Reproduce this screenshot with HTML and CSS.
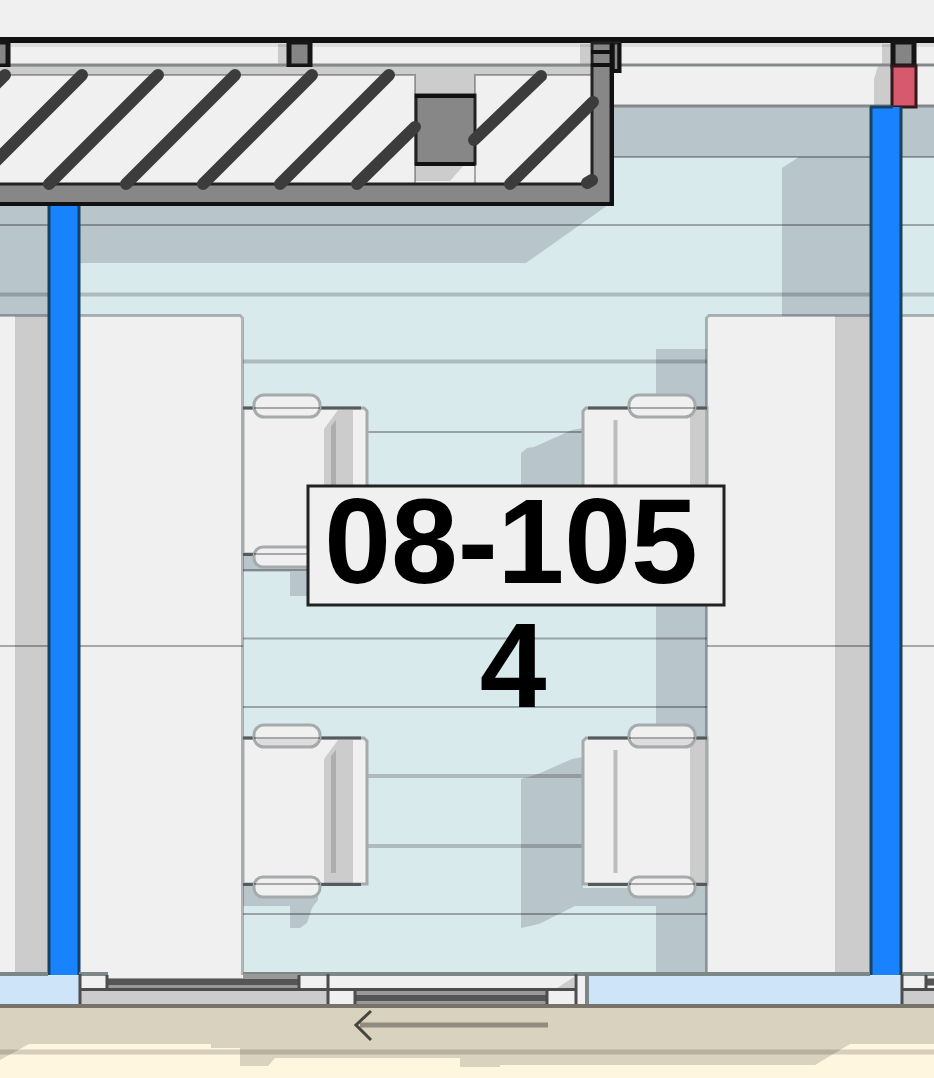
FILE: index.html
```html
<!DOCTYPE html>
<html lang="en">
<head>
<meta charset="utf-8">
<meta name="viewport" content="width=device-width, initial-scale=1">
<title>Room 08-105</title>
<link rel="stylesheet" href="styles.css">
</head>
<body>
<main class="plan">
<svg class="plan-drawing" viewBox="0 0 934 1078" role="img" aria-label="Floor plan of room 08-105, 4 seats">
  <defs>
    <g id="seat-left">
      <path class="seat" d="M243 738H364L367 741V884H243Z"/>
      <path class="shade" d="M324 884V759L338 740H353V884Z"/>
      <path class="crease-shade" d="M331 756L336 750V873H331Z"/>
      <path class="seat-edge" d="M243 738H361M243 884.500H361"/>
      <rect class="arm" x="254" y="725" width="66" height="22" rx="10"/>
      <path class="hair" d="M254 738H320"/>
      <rect class="arm" x="254" y="877" width="66" height="20" rx="9"/>
      <path class="hair" d="M254 884H320"/>
    </g>
    <g id="seat-right">
      <path class="seat" d="M707 738H586L583 741V884H707Z"/>
      <path class="shade" d="M690 739H706V884H690Z"/>
      <path class="crease" d="M615.500 750V873"/>
      <path class="seat-edge" d="M588 738H707M588 884.500H707"/>
      <rect class="arm" x="629" y="725" width="66" height="22" rx="10"/>
      <path class="hair" d="M629 738H695"/>
      <rect class="arm" x="629" y="877" width="66" height="20" rx="9"/>
      <path class="hair" d="M629 884H695"/>
    </g>
  </defs>

  <!-- Floor and cast shadows -->
  <rect class="floor" y="106" width="934" height="870"/>
  <path class="floor-shade" d="M0 205H49V316H0Z"/>
  <path class="floor-shade" d="M79 205H608L526 263H79Z"/>
  <path class="floor-shade" d="M612 106H934V157H870V316H782V168L799 157H612Z"/>
  <path class="floor-shade" d="M656 349H707V975H656V906H575L539 924L521 928V779L538 774L572 759L583 757V888H656Z"/>
  <path class="floor-shade" d="M521 486V453L527 448L534 447L572 430L583 428V486Z"/>
  <path class="floor-shade" d="M243 555H307V596H290V572H243Z"/>
  <path class="floor-shade" d="M243 885H318V900L312 908L307 923L300 928H290V906H243Z"/>
  <path class="floor-line" d="M612 157H934M0 225H934M243 432H707M243 570H707M243 638.500H707M243 707H707M243 914H707"/>
  <path class="floor-line wide" d="M0 294.500H934M243 361.500H707M243 776H707M243 846H707"/>

  <!-- Desks -->
  <rect class="surface" y="316" width="49" height="659"/>
  <rect class="surface" x="79" y="316" width="164" height="661"/>
  <rect class="surface" x="707" y="316" width="164" height="659"/>
  <rect class="surface" x="902" y="316" width="32" height="659"/>
  <rect class="shade" x="15" y="316" width="34" height="659"/>
  <rect class="shade" x="835" y="316" width="36" height="659"/>
  <path class="desk-line" d="M0 315.500H49M79 315.500H240L242.500 318V975M870 315.500H709L706.500 318V975M902 315.500H934"/>
  <path class="hair" d="M0 646H49M79 646H243M707 646H871M902 646H934"/>

  <!-- Seats -->
  <use href="#seat-left" y="-330"/>
  <use href="#seat-left"/>
  <use href="#seat-right" y="-330"/>
  <use href="#seat-right"/>
  <path class="shade soft" d="M257 739H318Q317 746 310 746H264Q258 746 257 739ZM632 739H693Q692 746 685 746H639Q633 746 632 739Z"/>

  <!-- Facade -->
  <rect class="surface" width="934" height="106"/>
  <path class="floor-line facade-edge" d="M612 106H934"/>
  <path class="shade" d="M278 44H288V64H278ZM580 44H590V64H580ZM882 44H892V65H882ZM878 66H892V105H874V79Z"/>
  <path class="facade-line" d="M0 65H934"/>
  <path class="shade soft" d="M0 42H934V47H0Z"/>
  <path class="outline thick" d="M0 40H934"/>
  <g class="post">
    <rect x="-10" y="42" width="18" height="24"/>
    <rect x="289" y="42" width="21" height="24"/>
    <rect x="893" y="42" width="21" height="24"/>
  </g>

  <!-- Hatched core wall -->
  <rect class="surface" y="67" width="592" height="118"/>
  <rect class="shade" y="66" width="592" height="9"/>
  <path class="hair" d="M0 75H415V183M475 183V75H592"/>
  <rect class="shade" x="415" y="75" width="60" height="21"/>
  <path class="shade" d="M415 165H464L450 181H415Z"/>
  <rect class="wall" x="416" y="95" width="59" height="69"/>
  <path class="outline" d="M415 96H475M415 164H475"/>
  <path class="wall" d="M-5 184H592V43H611V204H-5Z"/>
  <path class="outline" d="M0 204H612V43"/>
  <rect class="wall" x="613" y="43" width="6" height="28"/>
  <path class="outline" d="M591 52H612M591 65H612M619.500 43V71H612M612.500 43V71"/>
  <path class="hatch" d="M-27 184L82 75M-104 184L5 75M49 184L158 75M126 184L235 75M203 184L312 75M280 184L389 75M357 184L415 127M474 140L541 76M510 184L593 102M587 183L592 180"/>

  <!-- Partitions -->
  <path class="pillar" d="M892 66H916V107H892Z"/>
  <path class="partition" d="M48 206H79V975H48Z"/>
  <path class="partition" d="M870 107H902V975H870Z"/>
  <path class="partition-edge" d="M49 206V975M79 206V975M871 107V975M901 107V975"/>
  <path class="partition-edge" d="M870 107H893"/>

  <!-- Glazing and sliding door -->
  <rect class="surface" x="79" y="977" width="511" height="28"/>
  <rect class="glass" y="976" width="80" height="29"/>
  <rect class="glass" x="588" y="976" width="314" height="29"/>
  <rect class="surface" x="902" y="976" width="32" height="29"/>
  <path class="sill" d="M0 974H48M79 974H108M243 974H870M902 974H934"/>
  <path class="shade" d="M80 990H328V1004H80ZM902 990H934V1004H902ZM557 988L574 977V989Z"/>
  <path class="rail-light" d="M108 978H300V989H108ZM355 991H548V1004H355Z"/>
  <path class="rail-light" d="M243 974H300V980H243ZM927 978H934V986H927Z"/>
  <path class="rail-dark" d="M108 982H300M355 998H548M927 982H934"/>
  <path class="frame" d="M80 989.500H576M902 989.500H934M328 974V1005M576 974V1005M80 974V1005M902 974V1005M107 975V989M299 975V989M355 990V1004M547 990V1004M926 975V989"/>
  <path class="sill" d="M587 974V1005"/>

  <!-- Walkway -->
  <rect class="walkway" y="1005" width="934" height="73"/>
  <path class="walkway-shade" d="M0 1005H934V1044H850L815 1065H500V1067H460V1058H275L268 1066H240V1048H211V1044H29L0 1060Z"/>
  <path class="walkway-line" d="M0 1052H934"/>
  <path class="base-line" d="M0 1006H934"/>
  <path class="arrow-shaft" d="M360 1025H548"/>
  <path class="arrow-head" d="M371 1011L356 1025L371 1040"/>

  <!-- Room label -->
  <rect class="label-box" x="308" y="486" width="416" height="119"/>
  <text class="label-text" x="511" y="583">08-105</text>
  <text class="label-text" x="513" y="707">4</text>
</svg>
</main>
</body>
</html>
```
FILE: styles.css
```css
body {
  margin: 0;
  background: #f0f0f0;
}

.plan-drawing {
  display: block;
  width: 100%;
  height: auto;
}

.plan-drawing path,
.plan-drawing rect {
  stroke-width: 2px;
}

.floor { fill: #d9eaed; }
.surface { fill: #f0f0f0; }
.shade { fill: #000; fill-opacity: 0.15; }
.soft { fill-opacity: 0.08; }
.floor-shade { fill: #b8c5ca; }

.floor-line,
.hair,
.desk-line {
  fill: none;
  stroke: #000;
  stroke-opacity: 0.3;
}

.plan-drawing .wide {
  stroke-width: 4px;
  stroke-opacity: 0.2;
}

.plan-drawing .desk-line {
  stroke-width: 3px;
  stroke-opacity: 0.25;
}

.plan-drawing .facade-edge,
.plan-drawing .facade-line {
  fill: none;
  stroke: #858888;
  stroke-opacity: 1;
  stroke-width: 3px;
}

.seat,
.arm {
  fill: #f0f0f0;
  stroke: #a5aaab;
}

.plan-drawing .arm,
.plan-drawing .seat { stroke-width: 3px; }

.plan-drawing .seat-edge { fill: none; stroke: #555a5b; stroke-width: 3px; }
.crease-shade { fill: #aeaeae; }

.plan-drawing .crease {
  fill: none;
  stroke: #bdbdbd;
  stroke-width: 4px;
}

.outline { fill: none; stroke: #111; }
.plan-drawing .outline { stroke-width: 4px; }
.plan-drawing .outline.thick { stroke-width: 6px; }
.plan-drawing .wall { fill: #878787; stroke: #222; stroke-width: 3px; }

.plan-drawing .post rect {
  fill: #858585;
  stroke: #151515;
  stroke-width: 5px;
}

.plan-drawing .hatch {
  fill: none;
  stroke: #3c3c3c;
  stroke-width: 12px;
  stroke-linecap: round;
}

.plan-drawing .pillar { fill: #d6596d; stroke: #35181d; stroke-width: 3px; }
.partition { fill: #1982ff; }
.plan-drawing .partition-edge { fill: none; stroke: #174263; stroke-width: 3px; }

.glass { fill: #cee4f8; }
.plan-drawing .sill { fill: none; stroke: #7d8788; stroke-width: 4px; }
.rail-light { fill: #999; }
.plan-drawing .rail-dark { fill: none; stroke: #555; stroke-width: 6px; }
.plan-drawing .frame { fill: none; stroke: #4d4d4d; stroke-width: 3px; }

.walkway { fill: #fff6df; }
.walkway-shade { fill: #d9d2be; }
.plan-drawing .walkway-line { stroke: #000; stroke-opacity: 0.16; stroke-width: 5px; }
.plan-drawing .base-line { stroke: #77736a; stroke-width: 4px; }
.plan-drawing .arrow-shaft { stroke: #918c7f; stroke-width: 5px; }
.plan-drawing .arrow-head { fill: none; stroke: #45463f; stroke-width: 3px; }

.label-box { fill: #f0f0f0; stroke: #222; }
.plan-drawing .label-box { stroke-width: 3px; }

.label-text {
  font-family: "Liberation Sans", Arial, sans-serif;
  font-size: 120px;
  font-weight: 700;
  text-anchor: middle;
  fill: #000;
}
```
